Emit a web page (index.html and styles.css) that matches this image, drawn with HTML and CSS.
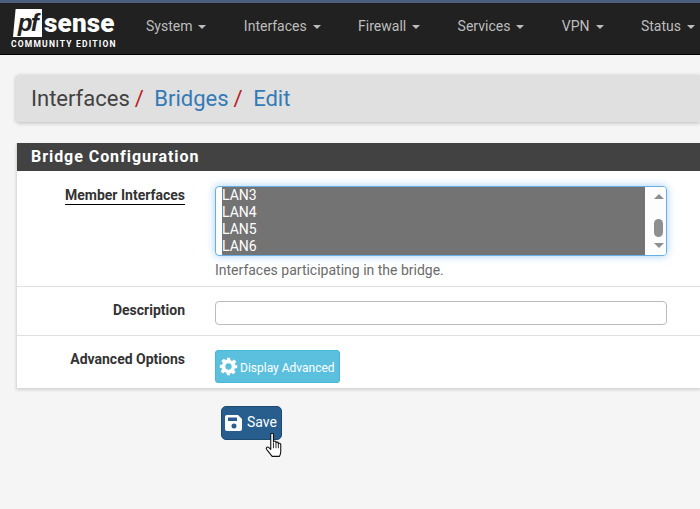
FILE: index.html
```html
<!DOCTYPE html>
<html lang="en">
<head>
<meta charset="utf-8">
<title>Bridge Configuration</title>
<link rel="stylesheet" href="styles.css">
</head>
<body>
<header class="nav">
  <div class="brand">
    <div class="logo"><span class="pf">pf</span><span class="sense">sense</span></div>
    <div class="edition">COMMUNITY EDITION</div>
  </div>
  <nav class="menu">
    <a class="item">System<i class="caret"></i></a>
    <a class="item">Interfaces<i class="caret"></i></a>
    <a class="item">Firewall<i class="caret"></i></a>
    <a class="item">Services<i class="caret"></i></a>
    <a class="item">VPN<i class="caret"></i></a>
    <a class="item">Status<i class="caret"></i></a>
  </nav>
</header>
<main class="page">
  <div class="crumbs">
    <span class="crumb-text">Interfaces</span><span class="sep">/</span>
    <a class="crumb-link">Bridges</a><span class="sep">/</span>
    <a class="crumb-link">Edit</a>
  </div>
  <section class="panel">
    <h2 class="panel-title">Bridge Configuration</h2>
    <div class="row row-member">
      <div class="label"><span class="underlined">Member Interfaces</span></div>
      <div class="control">
        <div class="listbox">
          <div class="options">
            <div class="option">LAN3</div>
            <div class="option">LAN4</div>
            <div class="option">LAN5</div>
            <div class="option">LAN6</div>
          </div>
          <div class="scrollbar">
            <i class="arrow-up"></i>
            <i class="thumb"></i>
            <i class="arrow-down"></i>
          </div>
        </div>
        <p class="help">Interfaces participating in the bridge.</p>
      </div>
    </div>
    <div class="row row-desc">
      <div class="label">Description</div>
      <div class="control"><input class="textbox" type="text"></div>
    </div>
    <div class="row row-adv">
      <div class="label">Advanced Options</div>
      <div class="control">
        <button class="btn btn-info" type="button">
          <svg class="gear" viewBox="0 0 24 24" width="19" height="19"><path fill="#fff" fill-rule="evenodd" d="M10 1h4l.6 3.1 1.900.8 2.600-1.800 2.800 2.800-1.800 2.600.8 1.900L23 10v4l-3.100.6-.8 1.900 1.800 2.600-2.800 2.800-2.600-1.800-1.900.8L14 23h-4l-.6-3.100-1.900-.8-2.600 1.800-2.800-2.800 1.800-2.600-.8-1.900L1 14v-4l3.100-.6.8-1.900-1.800-2.600 2.800-2.800 2.600 1.800 1.900-.8zM12 8a4 4 0 1 0 0 8 4 4 0 0 0 0-8z"/></svg>
          <span class="btn-text">Display Advanced</span>
        </button>
      </div>
    </div>
  </section>
  <div class="actions">
    <button class="btn btn-save" type="button">
      <svg viewBox="0 0 18 18" width="18" height="18"><path fill="#fff" fill-rule="evenodd" d="M2 1h11l4 4v10a2 2 0 0 1-2 2H2a2 2 0 0 1-2-2V3a2 2 0 0 1 2-2zm1 2.500v3.500h9V3.500zM9 9.500a2.500 2.500 0 1 0 0 5 2.500 2.500 0 0 0 0-5z"/></svg>
      <span class="btn-text">Save</span>
    </button>
    <svg class="hand" viewBox="1 1 15 23" width="18" height="25"><path fill="#fff" stroke="#111" stroke-width="1" stroke-linejoin="round" d="M5.500 2.200c0-1.500 2.500-1.500 2.500 0v7c0-1.200 2.300-1.200 2.300 0v1c0-1.100 2.200-1.100 2.200 0v1c0-1 2.200-1 2.200.2v6.600c0 2.200-.6 3.300-1.200 4.500H6.800c-1.200-1.500-3.200-4-5-6.300-1.100-1.500.6-3 2-1.800l1.700 1.700z"/><path fill="none" stroke="#111" stroke-width=".8" d="M8 10v5M10.300 10.500V15M12.500 11v4"/></svg>
  </div>
</main>
</body>
</html>
```
FILE: styles.css
```css
* { box-sizing: border-box; }
html, body { margin: 0; padding: 0; }
body {
  width: 700px;
  height: 509px;
  overflow: hidden;
  background: #f5f5f5;
  font-family: Roboto, "Liberation Sans", sans-serif;
  font-size: 14px;
  color: #333;
}
.nav {
  height: 55px;
  background: #212121;
  border-top: 3px solid #4d5f7e;
  border-bottom: 1px solid #000;
  display: flex;
  align-items: flex-start;
  overflow: hidden;
}
.brand {
  width: 130px;
  flex: none;
  padding: 6px 0 0 11px;
  color: #fff;
}
.logo {
  display: flex;
  align-items: center;
  height: 28px;
  margin-left: 2px;
}
.pf {
  display: block;
  flex: none;
  width: 29px;
  height: 28px;
  background: #fff;
  color: #212121;
  font-family: "Liberation Sans", sans-serif;
  font-style: italic;
  font-weight: 700;
  font-size: 24px;
  line-height: 27px;
  text-align: center;
  letter-spacing: -1.500px;
  clip-path: polygon(9% 0, 100% 0, 100% 100%, 0 100%);
}
.sense {
  font-family: Roboto, sans-serif;
  font-weight: 900;
  font-size: 26px;
  line-height: 28px;
  letter-spacing: .2px;
  margin-left: 2px;
}
.edition {
  font-family: Roboto, sans-serif;
  font-weight: 700;
  font-size: 8.500px;
  line-height: 10px;
  letter-spacing: 1.200px;
  margin-top: 2px;
  white-space: nowrap;
}
.menu {
  display: flex;
  gap: 37.400px;
  padding: 15px 0 0 16px;
  white-space: nowrap;
}
.item {
  color: #bdbdbd;
  font-size: 14px;
  line-height: 17px;
  display: flex;
  align-items: center;
}
.caret {
  width: 0;
  height: 0;
  margin-left: 6px;
  margin-top: 1px;
  border-left: 4px solid transparent;
  border-right: 4px solid transparent;
  border-top: 4px solid #bdbdbd;
}
.page {
  padding: 20px 0 0 16px;
}
.crumbs {
  height: 47px;
  background: #e0e0e0;
  box-shadow: 0 1px 4px rgba(0, 0, 0, .25);
  border-radius: 3px 0 0 3px;
  padding-left: 15px;
  font-size: 22px;
  line-height: 48px;
  white-space: nowrap;
  color: #424242;
}
.sep {
  color: #b71c1c;
  margin-left: 5px;
}
.crumb-link {
  color: #337ab7;
  margin-left: 5px;
}
.panel {
  margin-top: 21px;
  background: #fff;
  border-left: 1px solid #ddd;
  box-shadow: 0 2px 3px rgba(0, 0, 0, .14);
}
.panel-title {
  margin: 0;
  height: 28px;
  background: #424242;
  color: #fff;
  font-size: 16px;
  font-weight: 700;
  line-height: 28px;
  letter-spacing: .95px;
  padding-left: 14px;
}
.row {
  display: flex;
  border-bottom: 1px solid #e0e0e0;
}
.row-member { height: 116px; padding-top: 15px; }
.row-desc { height: 49px; padding-top: 14px; }
.row-adv { height: 52px; padding-top: 14px; border-bottom: 0; }
.label {
  width: 168px;
  flex: none;
  text-align: right;
  font-weight: 700;
  font-size: 14px;
  line-height: 18px;
  color: #333;
}
.underlined {
  display: inline-block;
  border-bottom: 1px solid #000;
  line-height: 17px;
}
.control {
  margin-left: 30px;
  width: 452px;
  flex: none;
}
.listbox {
  display: flex;
  height: 70px;
  border: 1px solid #66afe9;
  border-radius: 4px;
  box-shadow: 0 0 8px rgba(102, 175, 233, .6);
  background: #fff;
  padding-left: 6px;
  overflow: hidden;
}
.options {
  flex: 1;
  background: #737373;
}
.option {
  height: 17px;
  line-height: 17px;
  font-size: 14px;
  color: #fff;
}
.scrollbar {
  width: 21px;
  flex: none;
  background: #fdfdfd;
  display: flex;
  flex-direction: column;
  align-items: center;
  padding: 7px 0 0 6px;
}
.arrow-up, .arrow-down {
  width: 0;
  height: 0;
  border-left: 5px solid transparent;
  border-right: 5px solid transparent;
}
.arrow-up { border-bottom: 5px solid #8f8f8f; }
.arrow-down { border-top: 5px solid #8f8f8f; }
.thumb {
  width: 9px;
  height: 18px;
  border-radius: 5px;
  background: #8f8f8f;
  margin: 20px 0 6px;
}
.help {
  margin: 6px 0 0;
  font-size: 14px;
  line-height: 16px;
  color: #6b6b6b;
}
.textbox {
  display: block;
  width: 100%;
  height: 24px;
  border: 1px solid #bbb;
  border-radius: 4px;
  background: #fff;
  outline: 0;
  padding: 0;
}
.btn {
  display: flex;
  align-items: center;
  border-radius: 3px;
  color: #fff;
  font-family: Roboto, sans-serif;
  padding: 0;
  cursor: pointer;
}
.btn-text {
  position: relative;
  top: 1px;
}
.btn-info {
  width: 125px;
  height: 33px;
  background: #5bc0de;
  border: 1px solid #46b8da;
  font-size: 12px;
  padding-left: 3px;
  gap: 2px;
}
.actions {
  position: relative;
  padding: 18px 0 0 205px;
}
.btn-save {
  width: 61px;
  height: 34px;
  background: #285e8e;
  border: 1px solid #1e4a70;
  border-radius: 5px;
  font-size: 14px;
  padding-left: 3px;
  gap: 4px;
}
.btn-save .btn-text { top: -1px; }
.hand {
  position: absolute;
  left: 249px;
  top: 45px;
}
```
